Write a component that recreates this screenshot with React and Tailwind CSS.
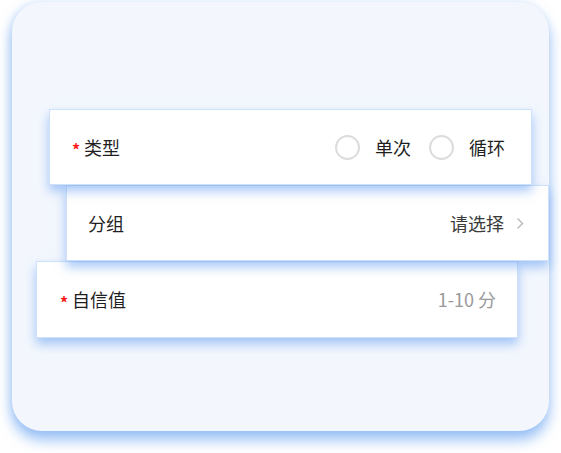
const font = { fontFamily: '"Noto Sans CJK SC", "Noto Sans", sans-serif' };

const Radio = ({ label }) => (
  <div className="flex items-center">
    <span className="size-[25px] rounded-full border-2 border-[#dcdcdc] bg-white" />
    <span className="ml-[15px] text-[18px] text-[#1f1f1f]">{label}</span>
  </div>
);

const Required = () => (
  <span className="mr-[6px] mt-[4px] w-[6px] text-[16px] font-bold leading-none text-[#ff1a1a]">*</span>
);

export default function App() {
  return (
    <div className="min-h-[453px] bg-white pt-[2px] pl-[12px]" style={font}>
      <div className="flex h-[429px] w-[537px] flex-col rounded-[30px] bg-[#f3f7fd] pt-[107px] shadow-[0_9px_14px_rgba(100,160,240,0.65),-2px_0_8px_rgba(170,200,245,0.4)]">
        {/* 类型 */}
        <div className="relative z-30 ml-[37px] flex h-[76px] w-[483px] items-center border border-[#cfe1fa] bg-white pr-[26px] pl-[22px] shadow-[0_6px_10px_rgba(95,155,240,0.55)]">
          <Required />
          <span className="text-[18px] text-[#1f1f1f]">类型</span>
          <div className="ml-auto flex items-center gap-[18px]">
            <Radio label="单次" />
            <Radio label="循环" />
          </div>
        </div>

        {/* 分组 */}
        <div className="relative z-20 ml-[54px] flex h-[76px] w-[483px] items-center border border-[#cfe1fa] bg-white pr-[24px] pl-[21px] shadow-[0_6px_10px_rgba(95,155,240,0.55)]">
          <span className="text-[18px] text-[#1f1f1f]">分组</span>
          <span className="ml-auto text-[18px] text-[#3a3a3a]">请选择</span>
          <svg className="ml-[12px]" width="8" height="13" viewBox="0 0 8 13" fill="none">
            <path d="M1.5 1.5 6.5 6.5 1.5 11.5" stroke="#bdbdbd" strokeWidth="1.5" />
          </svg>
        </div>

        {/* 自信值 */}
        <div className="relative z-10 ml-[24px] flex h-[77px] w-[482px] items-center border border-[#cfe1fa] bg-white pr-[21px] pl-[23px] shadow-[0_6px_10px_rgba(95,155,240,0.55)]">
          <Required />
          <span className="text-[18px] text-[#1f1f1f]">自信值</span>
          <span className="ml-auto text-[18px] text-[#999999]">1-10 分</span>
        </div>
      </div>
    </div>
  );
}
